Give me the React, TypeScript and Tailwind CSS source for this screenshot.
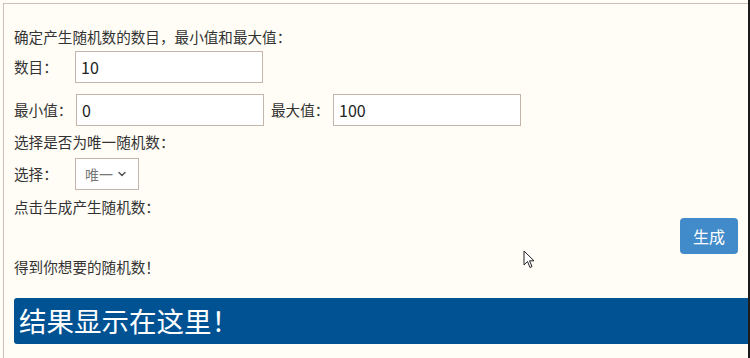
import { ChevronDown } from "lucide-react";

const font = { fontFamily: '"Microsoft YaHei", "Noto Sans CJK SC", "Noto Sans", sans-serif' };

function Field({ value, width }: { value: string; width: string }) {
  return (
    <div
      className={`flex h-[32px] ${width} items-center border border-[#c4b5aa] bg-white pl-[5px] text-[16px] text-[#222]`}
    >
      {value}
    </div>
  );
}

export default function App() {
  return (
    <div
      className="h-[358px] w-[750px] overflow-hidden border-r-2 border-[#1c1c1c] bg-[#fffdf6] pl-[3px] pt-[3px]"
      style={font}
    >
      <div className="relative h-full border-l border-t border-[#cdbfb3] pl-[10px] pr-[10px] pt-[23px] text-[14.6px] leading-[20px] text-[#333]">
        <div>确定产生随机数的数目，最小值和最大值：</div>

        <div className="mt-[4px] flex items-center">
          <span className="w-[61px]">数目：</span>
          <Field value="10" width="w-[188px]" />
        </div>

        <div className="mt-[11px] flex items-center">
          <span className="w-[62px]">最小值：</span>
          <Field value="0" width="w-[188px]" />
          <span className="ml-[7px] w-[62px]">最大值：</span>
          <Field value="100" width="w-[188px]" />
        </div>

        <div className="mt-[6px]">选择是否为唯一随机数：</div>

        <div className="mt-[6px] flex items-center">
          <span className="w-[61px]">选择：</span>
          <div className="flex h-[32px] w-[64px] items-center gap-[3px] border border-[#c4b5aa] bg-white pl-[9px] text-[14px] text-[#777]">
            唯一
            <ChevronDown className="h-[12px] w-[12px] text-[#555]" strokeWidth={3} />
          </div>
        </div>

        <div className="mt-[7px]">点击生成产生随机数：</div>

        <div className="mt-[1px] flex justify-end">
          <button className="flex h-[36px] w-[58px] items-center justify-center rounded-[4px] bg-[#428bca] text-[16px] text-white">
            生成
          </button>
        </div>

        <div className="mt-[3px]">得到你想要的随机数！</div>

        <div className="-mr-[10px] mt-[21px] flex h-[46px] items-center rounded-l-[3px] bg-[#005293] pl-[5px] text-[27.5px] leading-none text-white">
          结果显示在这里！
        </div>

        <svg
          className="absolute left-[519px] top-[246px]"
          width="14"
          height="20"
          viewBox="0 0 14 20"
        >
          <path
            d="M1 1 L1 15 L4.5 11.5 L7 17.5 L9 16.5 L6.5 10.8 L11 10.8 Z"
            fill="white"
            stroke="#222"
            strokeWidth="1"
            strokeLinejoin="round"
          />
        </svg>
      </div>
    </div>
  );
}
